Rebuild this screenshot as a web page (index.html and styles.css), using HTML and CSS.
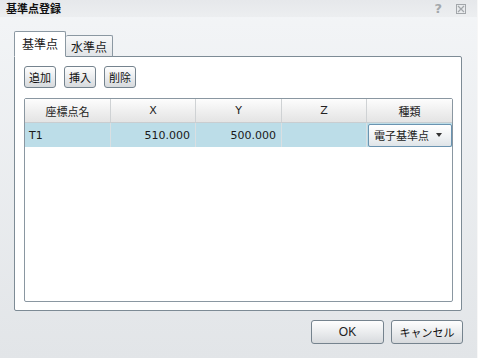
FILE: index.html
```html
<!DOCTYPE html>
<html lang="ja">
<head>
<meta charset="utf-8">
<link rel="stylesheet" href="styles.css">
</head>
<body>
<div class="window">
  <div class="titlebar">
    <span class="title">基準点登録</span>
    <span class="tools">
      <span class="help">?</span>
      <svg class="close" width="10" height="10" viewBox="0 0 10 10"><rect x="0.5" y="0.5" width="9" height="9" fill="none" stroke="#a2a6aa"/><path d="M2 2 L8 8 M8 2 L2 8" stroke="#a2a6aa" stroke-width="1.2"/></svg>
    </span>
  </div>
  <div class="content">
    <div class="tabs">
      <div class="tab active">基準点</div>
      <div class="tab">水準点</div>
    </div>
    <div class="panel">
      <div class="toolbar">
        <button class="btn small">追加</button>
        <button class="btn small">挿入</button>
        <button class="btn small">削除</button>
      </div>
      <div class="grid">
        <div class="head">
          <div class="hc">座標点名</div>
          <div class="hc">X</div>
          <div class="hc">Y</div>
          <div class="hc">Z</div>
          <div class="hc last">種類</div>
        </div>
        <div class="row sel">
          <div class="c left">T1</div>
          <div class="c num">510.000</div>
          <div class="c num">500.000</div>
          <div class="c num"></div>
          <div class="c last dd-cell">
            <div class="dropdown"><span>電子基準点</span><span class="arrow"></span></div>
          </div>
        </div>
      </div>
    </div>
    <div class="footer">
      <button class="btn big ok">OK</button>
      <button class="btn big">キャンセル</button>
    </div>
  </div>
</div>
</body>
</html>
```
FILE: styles.css
```css
* { box-sizing: border-box; }
html, body { margin: 0; padding: 0; }
body {
  width: 478px;
  height: 358px;
  overflow: hidden;
  font-family: "DejaVu Sans", "Noto Sans CJK JP", sans-serif;
  font-size: 11px;
  color: #1a1a1a;
}
.window {
  width: 478px;
  height: 358px;
  display: flex;
  flex-direction: column;
  background: linear-gradient(#f3f5f7, #e2e5e8);
  border-right: 1px solid #f7f7f7;
}
.titlebar {
  height: 17px;
  flex: none;
  display: flex;
  align-items: center;
  justify-content: space-between;
  padding: 0 11px 0 6px;
  background: linear-gradient(#e6e8eb, #eceef0);
}
.title {
  font-family: "Noto Sans CJK JP", sans-serif;
  font-weight: bold;
  font-size: 11px;
  color: #111;
  line-height: 17px;
}
.tools { display: flex; align-items: center; gap: 14px; }
.help {
  font-family: "DejaVu Sans", sans-serif;
  font-weight: bold;
  font-size: 13px;
  line-height: 13px;
  color: #a4a8ac;
}
.close { display: block; }
.content {
  flex: 1;
  display: flex;
  flex-direction: column;
  padding: 15px 15px 0 14px;
}
.tabs {
  display: flex;
  align-items: flex-end;
  height: 24px;
  position: relative;
  z-index: 1;
}
.tab {
  font-family: "Noto Sans CJK JP", sans-serif;
  font-size: 12px;
  height: 22px;
  width: 47px;
  margin-bottom: -1px;
  display: flex;
  align-items: center;
  justify-content: center;
  border: 1px solid #8b98a2;
  border-bottom-color: #7d8b95;
  border-left: none;
  border-radius: 2px 2px 0 0;
  background: linear-gradient(#f7f8f9, #e1e4e7);
}
.tab.active {
  height: 26px;
  width: 52px;
  border-left: 1px solid #8b98a2;
  border-bottom-color: #fff;
  background: #fff;
  padding-bottom: 2px;
}
.panel {
  height: 255px;
  border: 1px solid #7d8b95;
  border-radius: 0 2px 2px 2px;
  background: #fff;
  padding: 9px 9px 8px 9px;
  display: flex;
  flex-direction: column;
  gap: 10px;
}
.toolbar { display: flex; gap: 8px; }
.btn {
  font-family: "Noto Sans CJK JP", sans-serif;
  font-size: 11px;
  color: #111;
  border: 1px solid #75838e;
  border-radius: 3px;
  background: linear-gradient(#fefefe, #e9ebed 55%, #d7dadd);
  padding: 0;
  margin: 0;
  display: flex;
  align-items: center;
  justify-content: center;
}
.btn.small { width: 32px; height: 22px; }
.btn.big { width: 72px; height: 24px; }
.btn.ok { width: 73px; font-family: "Liberation Sans", sans-serif; font-size: 12px; color: #222; }
.grid {
  flex: 1;
  border: 1px solid #8a97a1;
  border-radius: 2px;
  display: flex;
  flex-direction: column;
  width: 429px;
}
.head, .row {
  display: grid;
  grid-template-columns: 86px 85px 86px 85px 85px;
}
.head {
  height: 24px;
  background: linear-gradient(#fdfdfd, #f0f0f0 50%, #e4e4e4);
  border-bottom: 1px solid #c9cdd0;
}
.hc {
  font-family: "DejaVu Sans", "Noto Sans CJK JP", sans-serif;
  display: flex;
  align-items: center;
  justify-content: center;
  border-right: 1px solid #cfd2d4;
  color: #222;
}
.hc:first-child, .hc.last { font-family: "Noto Sans CJK JP", sans-serif; }
.hc.last, .c.last { border-right: none; }
.row { height: 24px; }
.row.sel { background: #bcdde8; }
.c {
  display: flex;
  align-items: center;
  border-right: 1px solid #d9dfe2;
  padding: 0 5px 0 4px;
}
.c.num { justify-content: flex-end; }
.dd-cell { padding: 0 0 0 1px; }
.dropdown {
  width: 85px;
  height: 23px;
  border: 1px solid #6a93b0;
  border-radius: 2px;
  background: linear-gradient(#ffffff, #eef1f3 60%, #dfe4e8);
  display: flex;
  align-items: center;
  justify-content: space-between;
  padding: 0 9px 0 5px;
  font-family: "Noto Sans CJK JP", sans-serif;
  font-size: 11px;
}
.arrow {
  width: 0;
  height: 0;
  border-left: 3px solid transparent;
  border-right: 3px solid transparent;
  border-top: 4px solid #333;
}
.footer {
  display: flex;
  justify-content: flex-end;
  gap: 7px;
  padding-top: 9px;
  margin-right: -1px;
}
```
